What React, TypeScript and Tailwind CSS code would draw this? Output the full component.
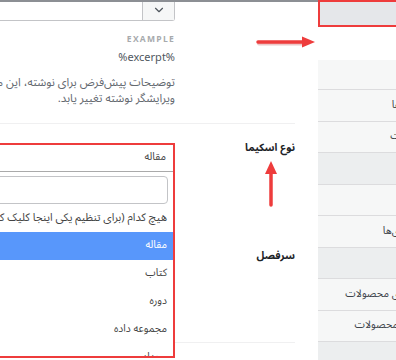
import { ChevronDown } from 'lucide-react';

const font = "font-['Noto_Sans_Arabic','DejaVu_Sans',sans-serif]";

// right-hand settings menu (only its left edge is in view)
const menuRows = [
  { h: 'h-[30px]', bg: 'bg-[#f6f7f7]', label: '' },
  { h: 'h-[32px]', bg: 'bg-[#f6f7f7]', label: 'نویسنده‌ها' },
  { h: 'h-[31px]', bg: 'bg-[#f6f7f7]', label: 'پیوند ثابت' },
  { h: 'h-[32px]', bg: 'bg-[#eceeef]', label: '' },
  { h: 'h-[31px]', bg: 'bg-[#f6f7f7]', label: '' },
  { h: 'h-[32px]', bg: 'bg-[#f6f7f7]', label: 'دسته‌بندی‌ها' },
  { h: 'h-[31px]', bg: 'bg-[#eceeef]', label: '' },
  { h: 'h-[32px]', bg: 'bg-[#f6f7f7]', label: 'دسته‌بندی محصولات' },
  { h: 'h-[31px]', bg: 'bg-[#f6f7f7]', label: 'برچسب محصولات' },
  { h: 'h-[32px]', bg: 'bg-[#eceeef]', label: '' },
];

const options = ['کتاب', 'دوره', 'مجموعه داده', 'رویداد'];

export default function App() {
  return (
    <div className={`relative w-[396px] h-[360px] overflow-hidden bg-white ${font}`}>
      <div className="flex w-[458px]">
        {/* Main settings column */}
        <main className="w-[318px] shrink-0 border-t-2 border-[#8c8f94] pr-[23px]">
          <div className="flex h-[121px]">
            <div dir="rtl" className="w-[175px] shrink-0">
              <div className="flex w-[400px] h-[19px] border-b border-r border-[#c3c4c7] rounded-br-[3px]">
                <div className="w-[32px] border-l border-[#c3c4c7] bg-[#f6f7f7] flex items-center justify-center">
                  <ChevronDown size={14} strokeWidth={2} className="text-[#50575e] -mt-[3px]" />
                </div>
              </div>
              <div className="mt-[12px] text-[8.5px] font-bold tracking-[0.15em] text-[#a7aaad] leading-[12px] text-right" dir="ltr">
                EXAMPLE
              </div>
              <div className="mt-[5px] text-[11px] text-[#50575e] leading-[16px] text-right" dir="ltr">
                %excerpt%
              </div>
              <p className="mt-[8px] w-[400px] text-[11.5px] leading-[16px] text-[#646970] whitespace-nowrap">
                توضیحات پیش‌فرض برای نوشته، این می‌تواند برای هر نوشته در
                <br />
                ویرایشگر نوشته تغییر یابد.
              </p>
            </div>
          </div>
          <div className="h-px bg-[#f0f0f1] -ml-[20px]" />

          {/* Schema type */}
          <div className="flex pt-[18px] h-[126px]">
            <div className="w-[175px] shrink-0" />
            <div dir="rtl" className="flex-1 text-[10.5px] font-bold text-[#1d2327] leading-[12px]">
              نوع اسکیما
            </div>
          </div>

          {/* Header */}
          <div className="flex h-[92px]">
            <div className="w-[175px] shrink-0" />
            <div dir="rtl" className="flex-1 text-[10.5px] font-bold text-[#1d2327] leading-[12px]">
              سرفصل
            </div>
          </div>
          <div className="h-px bg-[#f0f0f1] -ml-[20px]" />
        </main>

        {/* Side menu */}
        <aside dir="rtl" className="w-[140px] shrink-0">
          <div className="h-[27px] bg-[#e5e7ea] border-2 border-[#ee3c3c]" />
          <div className="mt-[33px] border-r border-[#dcdcde]">
            {menuRows.map((row, i) => (
              <div
                key={i}
                className={`${row.h} ${row.bg} border-b border-[#dcdcde] flex items-center pr-[23px] text-[10.5px] text-[#3c434a] whitespace-nowrap`}
              >
                {row.label}
              </div>
            ))}
          </div>
        </aside>
      </div>

      {/* Open schema dropdown, outlined in red */}
      <div dir="rtl" className="absolute left-[-225px] top-[143px] w-[400px] h-[215px] border-2 border-[#ee3c3c] bg-white overflow-hidden">
        <div className="h-[26px] flex items-center pr-[7px] text-[10.5px] text-[#444]">مقاله</div>
        <div className="border-t border-[#aaaaaa] pt-[4px]">
          <div className="mr-[5px] h-[28px] border border-[#c3c4c7] rounded-[4px] bg-white" />
          <div className="h-[28px] flex items-center pr-[6px] text-[11px] text-[#444] whitespace-nowrap">
            هیچ کدام (برای تنظیم یکی اینجا کلیک کنید)
          </div>
          <div className="h-[28px] flex items-center pr-[6px] text-[10.5px] text-white bg-[#5897fb]">مقاله</div>
          {options.map((o) => (
            <div key={o} className="h-[28px] flex items-center pr-[6px] text-[10.5px] text-[#444]">
              {o}
            </div>
          ))}
        </div>
      </div>

      {/* Annotation arrows */}
      <svg className="absolute left-[256px] top-[35px]" width="62" height="16" viewBox="0 0 62 16">
        <path d="M3 8.5 H48" stroke="#b32020" strokeOpacity="0.25" strokeWidth="4" strokeLinecap="round" />
        <path d="M2 7 H48" stroke="#ee3c3c" strokeWidth="3.5" strokeLinecap="round" />
        <path d="M46 1.5 L59 7 L46 12.5 Z" fill="#ee3c3c" />
      </svg>
      <svg className="absolute left-[263px] top-[159px]" width="16" height="50" viewBox="0 0 16 50">
        <path d="M8 14 V46" stroke="#ee3c3c" strokeWidth="3.5" strokeLinecap="round" />
        <path d="M2 15 L8 2 L14 15 Z" fill="#ee3c3c" />
      </svg>
    </div>
  );
}
